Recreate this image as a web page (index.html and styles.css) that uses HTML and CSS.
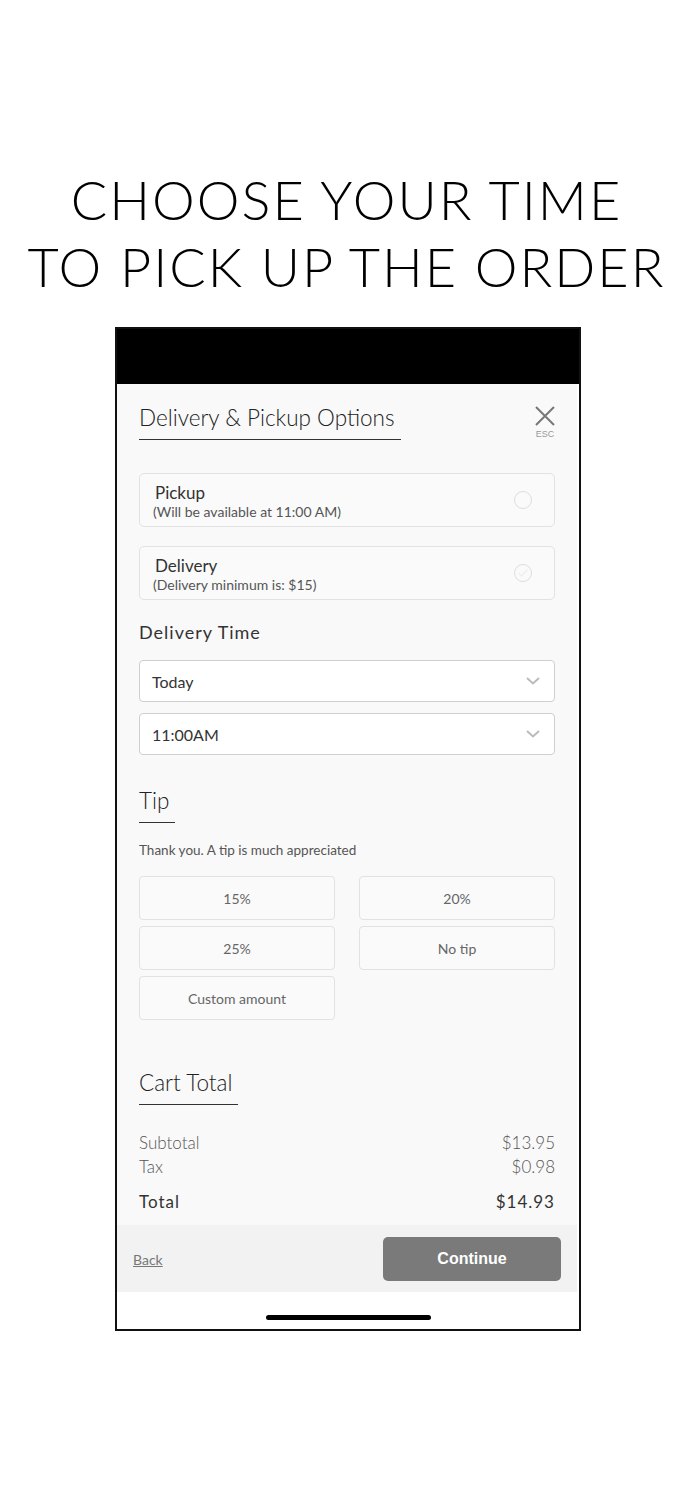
FILE: index.html
```html
<!DOCTYPE html>
<html>
<head>
<meta charset="utf-8">
<link rel="stylesheet" href="styles.css">
</head>
<body>
<h1 class="headline">CHOOSE YOUR TIME<br>TO PICK UP THE ORDER</h1>
<div class="phone">
  <div class="statusbar"></div>
  <div class="panel">
    <div class="panel-head">
      <h2 class="section-title">Delivery &amp; Pickup Options</h2>
      <div class="close">
        <svg width="22" height="22" viewBox="0 0 22 22"><path d="M2 2 L20 20 M20 2 L2 20" stroke="#777" stroke-width="2" fill="none"/></svg>
        <span class="esc">ESC</span>
      </div>
    </div>

    <div class="option first">
      <div class="option-text">
        <div class="option-name">Pickup</div>
        <div class="option-sub">(Will be available at 11:00 AM)</div>
      </div>
      <span class="radio"></span>
    </div>
    <div class="option second">
      <div class="option-text">
        <div class="option-name">Delivery</div>
        <div class="option-sub">(Delivery minimum is: $15)</div>
      </div>
      <span class="radio"><svg width="12" height="10" viewBox="0 0 12 10"><path d="M1.5 5 L4.5 8 L10.5 1.5" stroke="#eee" stroke-width="1.3" fill="none"/></svg></span>
    </div>

    <h3 class="subhead">Delivery Time</h3>
    <div class="select">
      <span>Today</span>
      <svg class="chev" width="14" height="8" viewBox="0 0 14 8"><path d="M1 1 L7 6.5 L13 1" stroke="#bbb" stroke-width="2" fill="none"/></svg>
    </div>
    <div class="select second-select">
      <span>11:00AM</span>
      <svg class="chev" width="14" height="8" viewBox="0 0 14 8"><path d="M1 1 L7 6.5 L13 1" stroke="#bbb" stroke-width="2" fill="none"/></svg>
    </div>

    <h2 class="section-title tip-title">Tip</h2>
    <p class="thanks">Thank you. A tip is much appreciated</p>
    <div class="tip-grid">
      <div class="tip-btn">15%</div>
      <div class="tip-btn">20%</div>
      <div class="tip-btn">25%</div>
      <div class="tip-btn">No tip</div>
      <div class="tip-btn">Custom amount</div>
    </div>

    <h2 class="section-title cart-title">Cart Total</h2>
    <div class="totals">
      <div class="row"><span>Subtotal</span><span>$13.95</span></div>
      <div class="row"><span>Tax</span><span>$0.98</span></div>
      <div class="row total"><span>Total</span><span>$14.93</span></div>
    </div>

    <div class="footer">
      <a class="back">Back</a>
      <div class="continue">Continue</div>
    </div>
  </div>
  <div class="home-area"><span class="home-bar"></span></div>
</div>
</body>
</html>
```

FILE: styles.css
```css
html, body {
  margin: 0;
  padding: 0;
  background: #fff;
}
body {
  font-family: "Lato", "Noto Sans", sans-serif;
  color: #333;
}
.headline {
  margin: 166px 0 0 0;
  font-family: "Lato", sans-serif;
  font-weight: 300;
  font-size: 54px;
  line-height: 67px;
  letter-spacing: 2px;
  white-space: nowrap;
  text-align: center;
  color: #000;
}
.phone {
  margin: 27px 0 0 115px;
  width: 466px;
  box-sizing: border-box;
  border: 2px solid #111;
  background: #fff;
}
.statusbar {
  height: 55px;
  background: #000;
}
.panel {
  background: #f9f9f9;
  margin-right: 2px;
}
.panel-head,
.option,
.subhead,
.select,
.section-title,
.thanks,
.tip-grid,
.totals {
  margin-left: 22px;
  margin-right: 22px;
}
.panel-head {
  display: flex;
  justify-content: space-between;
  align-items: flex-start;
  padding-top: 19px;
}
.section-title {
  display: inline-block;
  margin-top: 0;
  margin-bottom: 0;
  font-weight: 300;
  font-size: 22.5px;
  line-height: 30px;
  color: #222;
  padding: 0 6px 6px 0;
  border-bottom: 1px solid #333;
}
.panel-head .section-title {
  margin: 0;
}
.close {
  display: flex;
  flex-direction: column;
  align-items: center;
  margin-top: 2px;
  margin-right: -1px;
}
.esc {
  font-family: "Liberation Sans", sans-serif;
  font-size: 9px;
  line-height: 10px;
  color: #999;
  margin-top: 2px;
}
.option {
  display: flex;
  align-items: center;
  justify-content: space-between;
  border: 1px solid #e2e2e2;
  border-radius: 5px;
  background: #fafafa;
  padding: 9px 22px 5px 15px;
}
.option.first {
  margin-top: 33px;
}
.option.second {
  margin-top: 19px;
}
.option-name {
  font-size: 17px;
  line-height: 20px;
  color: #333;
}
.option-sub {
  font-size: 14px;
  line-height: 18px;
  color: #555;
  margin-left: -2px;
}
.radio {
  width: 16px;
  height: 16px;
  border: 1px solid #ddd;
  border-radius: 50%;
  display: flex;
  align-items: center;
  justify-content: center;
  margin-top: -4px;
}
.subhead {
  margin-top: 20px;
  margin-bottom: 0;
  font-size: 18px;
  line-height: 24px;
  font-weight: 400;
  letter-spacing: 1px;
  color: #333;
}
.select {
  display: flex;
  align-items: center;
  justify-content: space-between;
  height: 42px;
  box-sizing: border-box;
  margin-top: 16px;
  padding: 0 14px 0 12px;
  background: #fff;
  border: 1px solid #cfcfcf;
  border-radius: 4px;
  font-size: 16px;
  color: #333;
}
.select.second-select {
  margin-top: 11px;
}
.tip-title {
  margin-top: 31px;
  display: block;
  width: max-content;
}
.thanks {
  margin-top: 18px;
  margin-bottom: 0;
  font-size: 13.5px;
  line-height: 18px;
  color: #555;
}
.tip-grid {
  margin-top: 17px;
  display: grid;
  grid-template-columns: 1fr 1fr;
  column-gap: 24px;
  row-gap: 6px;
}
.tip-btn {
  height: 44px;
  box-sizing: border-box;
  display: flex;
  align-items: center;
  justify-content: center;
  border: 1px solid #e2e2e2;
  border-radius: 4px;
  background: #fafafa;
  font-size: 14px;
  color: #666;
}
.cart-title {
  margin-top: 48px;
  display: block;
  width: max-content;
}
.totals {
  margin-top: 26px;
}
.row {
  display: flex;
  justify-content: space-between;
  font-size: 17px;
  line-height: 24px;
  color: #555;
  font-weight: 300;
}
.row.total {
  margin-top: 11px;
  font-weight: 400;
  letter-spacing: 1px;
  color: #333;
}
.footer {
  margin-top: 11px;
  background: #f2f2f2;
  display: flex;
  justify-content: space-between;
  align-items: center;
  padding: 12px 16px 11px 16px;
}
.back {
  font-size: 14px;
  color: #777;
  text-decoration: underline;
}
.continue {
  width: 178px;
  height: 44px;
  border-radius: 5px;
  background: #7a7a7a;
  color: #fff;
  font-family: "Liberation Sans", Arial, sans-serif;
  font-weight: 700;
  font-size: 16px;
  display: flex;
  align-items: center;
  justify-content: center;
}
.home-area {
  height: 37px;
  display: flex;
  justify-content: center;
  align-items: flex-end;
}
.home-bar {
  width: 165px;
  height: 5px;
  background: #000;
  border-radius: 3px;
  margin-bottom: 9px;
}
```
